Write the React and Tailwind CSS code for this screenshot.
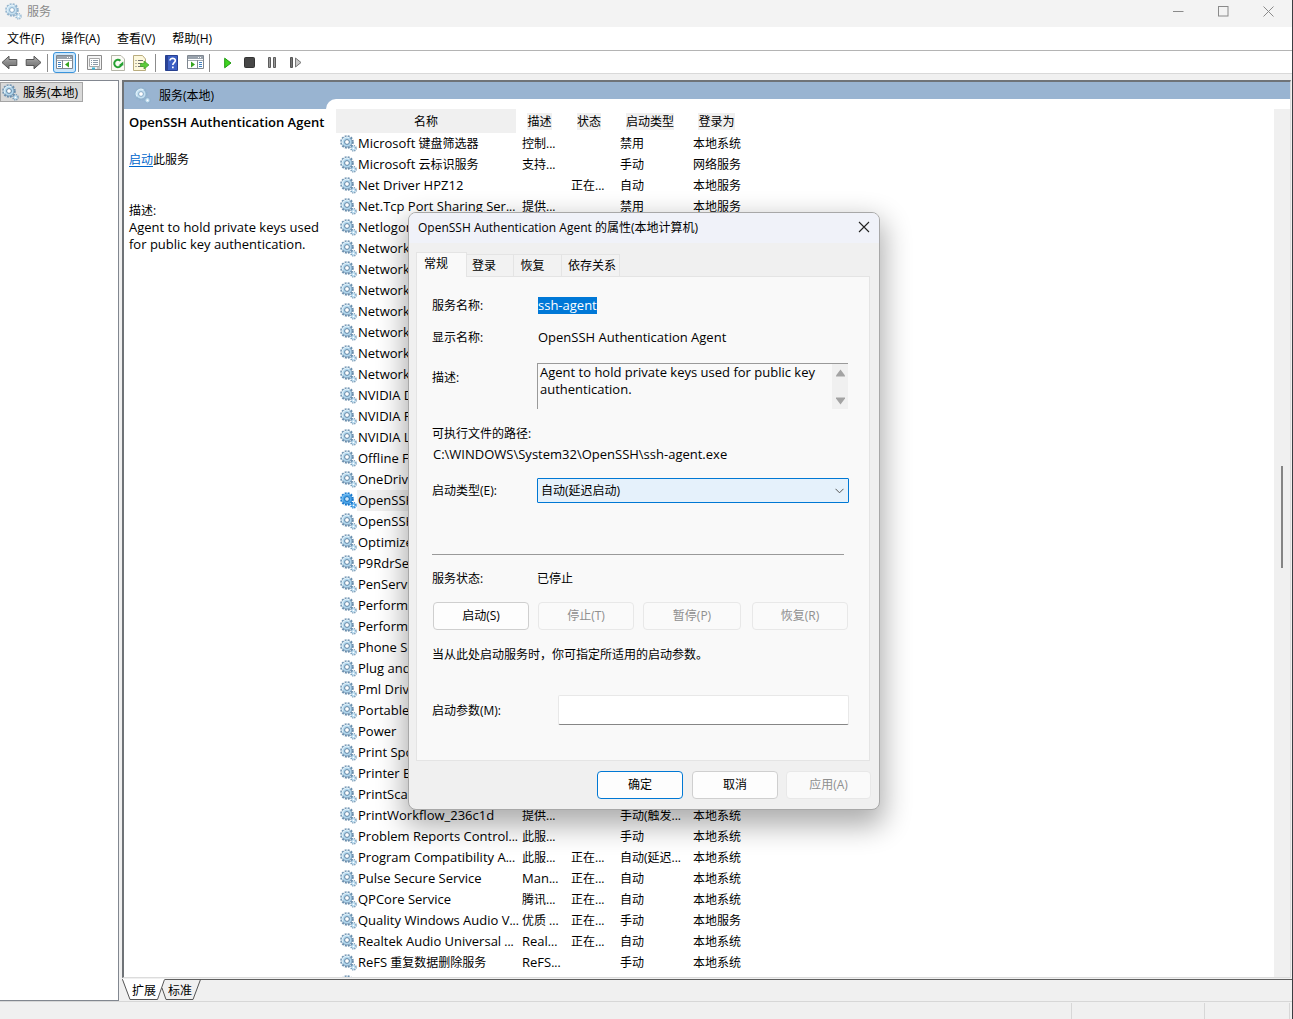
import React from "react";

function Gears({ active = false, faded = false }) {
  const teeth = active ? "#1478cf" : faded ? "#8fb2cd" : "#6a8fae";
  const ring = active ? "#4ba6ea" : faded ? "#c4e0f1" : "#b3d8ee";
  const edge = active ? "#0f6cbd" : faded ? "#86a9c6" : "#5f83a3";
  return (
    <svg width="17" height="17" viewBox="0 0 17 17" className="shrink-0" aria-hidden="true">
      <circle cx="7" cy="7" r="5.800" fill="none" stroke={teeth} strokeWidth="2" strokeDasharray="1.900 1.137" />
      <circle cx="7" cy="7" r="5" fill={ring} stroke={edge} strokeWidth="0.700" />
      <path d="M3 9.500A4.700 4.700 0 0 1 9.500 3" fill="none" stroke={active ? "#7cc1f3" : "#e2f3fc"} strokeWidth="1.200" />
      <circle cx="7" cy="7" r="2.400" fill={active ? "#cfe7f9" : "#fff"} stroke={edge} strokeWidth="1" />
      <circle cx="13.500" cy="13.300" r="2.500" fill="none" stroke={teeth} strokeWidth="1.600" strokeDasharray="1.100 0.860" />
      <circle cx="13.500" cy="13.300" r="1.500" fill="#fff" stroke={ring} strokeWidth="1.200" />
    </svg>
  );
}

function ToolButton({ label, children, className = "" }) {
  return (
    <button type="button" aria-label={label} className={`flex h-[21px] shrink-0 items-center justify-center ${className}`}>
      {children}
    </button>
  );
}

const Sep = ({ className = "" }) => <span className={`mb-px h-[18px] w-px shrink-0 bg-[#8c8c8c] ${className}`} />;

function Arrow({ flip }) {
  return (
    <svg width="17" height="15" viewBox="0 0 17 15" className={flip ? "-scale-x-100" : ""}>
      <defs>
        <linearGradient id="arrow" x1="0" y1="0" x2="0" y2="1">
          <stop offset="0" stopColor="#b5b5b5" />
          <stop offset="0.5" stopColor="#8a8a8a" />
          <stop offset="1" stopColor="#6f6f6f" />
        </linearGradient>
      </defs>
      <path d="M1 7.500 8 1.200v3.300h7.800v6H8v3.300z" fill="url(#arrow)" stroke="#555" strokeLinejoin="round" />
    </svg>
  );
}

function PanelIcon({ right }) {
  return (
    <svg width="17" height="15" viewBox="0 0 17 15">
      <path d="M.5.5h16v13H.5z" fill="#fff" stroke="#7f8790" />
      <path d="M1 1h15v3H1z" fill="#9aa3ad" />
      <path d="M11 2h1v1h-1zM13 2h1v1h-1z" fill="#fff" />
      <path d="M1 5.500h15" stroke="#a4abb3" />
      {right ? (
        <>
          <path d="M10.500 5v9" stroke="#7f8790" />
          <path d="M12 7.500h3M12 9.500h3M12 11.500h3" stroke="#3d7fc0" />
          <path d="M4 6.500v6l4-3z" fill="#36a51e" />
        </>
      ) : (
        <>
          <path d="M6.500 5v9" stroke="#7f8790" />
          <path d="M2 7.500h3M2 9.500h3M2 11.500h3" stroke="#3d7fc0" />
          <path d="M13 6.500v6l-4-3z" fill="#36a51e" />
        </>
      )}
    </svg>
  );
}

function Toolbar() {
  return (
    <div className="flex h-[23px] shrink-0 items-end border-b border-[#d9d9d9] bg-white">
      <ToolButton label="后退" className="ml-[1px]"><Arrow /></ToolButton>
      <ToolButton label="前进" className="ml-[7px]"><Arrow flip /></ToolButton>
      <Sep className="ml-[5px]" />
      <ToolButton label="控制台树" className="ml-[5px] w-[23px] rounded-[3px] border border-[#3a94dc] bg-[#cce6fa]">
        <PanelIcon />
      </ToolButton>
      <Sep className="ml-[2px]" />
      <ToolButton label="属性" className="ml-[8px]">
        <svg width="15" height="16" viewBox="0 0 15 16">
          <path d="M.5.5h14v14H.5z" fill="#f4f4f4" stroke="#8b8b8b" />
          <path d="M2.500 3.500h10v8h-10z" fill="#fff" stroke="#a8a8a8" />
          <path d="M4 5.500h1M6 5.500h5M4 7.500h1M6 7.500h5M4 9.500h1M6 9.500h5" stroke="#8d9aa8" />
          <path d="M10 13h3" stroke="#999" />
          <path d="M5 12.500h3v2H5z" fill="#35b4d8" />
        </svg>
      </ToolButton>
      <ToolButton label="刷新" className="ml-[9px]">
        <svg width="14" height="16" viewBox="0 0 14 16">
          <path d="M.5.5h9.500l3.500 3.500v11.500H.5z" fill="#fbfbf5" stroke="#b5b5a8" />
          <path d="M10.500 9.500A3.700 3.700 0 1 1 9.400 5.700" fill="none" stroke="#25a032" strokeWidth="2" />
          <path d="M7.400 10.500h4.900v-4z" fill="#25a032" />
        </svg>
      </ToolButton>
      <ToolButton label="导出列表" className="ml-[8px]">
        <svg width="17" height="16" viewBox="0 0 17 16">
          <path d="M.5.5h9L12.500 4v11.500H.5z" fill="#fdf8dc" stroke="#b9ac7e" />
          <path d="M2.500 5.500h1M5 5.500h5M2.500 8.500h1M5 8.500h4M2.500 11.500h1M5 11.500h5" stroke="#6e6e6e" />
          <path d="M7.500 8.500H11V6l5 4-5 4v-2.500H7.500z" fill="#5ccb3a" stroke="#3f9f2a" strokeWidth="0.700" />
        </svg>
      </ToolButton>
      <Sep className="ml-[5px]" />
      <ToolButton label="帮助" className="ml-[9px]">
        <svg width="13" height="16" viewBox="0 0 13 16">
          <path d="M.5.5h12v15H.5z" fill="#3c5fc4" stroke="#27408f" />
          <path d="M1 1h2v14H1z" fill="#2a4396" />
          <path d="M5 5.500C5 2.600 10.500 2.700 10.300 5.700 10.200 7.500 7.800 7.700 7.800 10" fill="none" stroke="#fff" strokeWidth="1.600" />
          <path d="M7 11.500h1.700v1.700H7z" fill="#fff" />
        </svg>
      </ToolButton>
      <ToolButton label="操作窗格" className="ml-[9px]"><PanelIcon right /></ToolButton>
      <Sep className="ml-[5px]" />
      <ToolButton label="启动服务" className="ml-[14px]">
        <svg width="8" height="12" viewBox="0 0 8 12"><path d="M.7 1.200 7 6 .7 10.800z" fill="#3fd321" stroke="#1f9a10" /></svg>
      </ToolButton>
      <ToolButton label="停止服务" className="ml-[12px]">
        <svg width="11" height="11" viewBox="0 0 11 11"><rect x=".5" y=".5" width="10" height="10" rx="1" fill="#474747" stroke="#333" /></svg>
      </ToolButton>
      <ToolButton label="暂停服务" className="ml-[13px]">
        <svg width="8" height="11" viewBox="0 0 8 11"><path d="M.5.5h2v10h-2zM5.500.5h2v10h-2z" fill="#999" stroke="#5c5c5c" /></svg>
      </ToolButton>
      <ToolButton label="重新启动服务" className="ml-[14px]">
        <svg width="12" height="11" viewBox="0 0 12 11"><path d="M.5.500h2v10h-2z" fill="#777" stroke="#555" /><path d="M5.500 1v9l5.500-4.500z" fill="#c8c8c8" stroke="#777" /></svg>
      </ToolButton>
    </div>
  );
}

const SYS = "本地系统";
const SRV = "本地服务";
const services = [
  ["Microsoft 键盘筛选器", "控制...", "", "禁用", SYS],
  ["Microsoft 云标识服务", "支持...", "", "手动", "网络服务"],
  ["Net Driver HPZ12", "", "正在...", "自动", SRV],
  ["Net.Tcp Port Sharing Ser...", "提供...", "", "禁用", SRV],
  ["Netlogon"],
  ["Network"],
  ["Network"],
  ["Network"],
  ["Network"],
  ["Network"],
  ["Network"],
  ["Network"],
  ["NVIDIA D"],
  ["NVIDIA F"],
  ["NVIDIA L"],
  ["Offline Fi"],
  ["OneDrive"],
  ["OpenSSH"],
  ["OpenSSH"],
  ["Optimize"],
  ["P9RdrSer"],
  ["PenServic"],
  ["Performa"],
  ["Performa"],
  ["Phone Se"],
  ["Plug and"],
  ["Pml Drive"],
  ["Portable"],
  ["Power"],
  ["Print Spo"],
  ["Printer Ex"],
  ["PrintScan"],
  ["PrintWorkflow_236c1d", "提供...", "", "手动(触发...", SYS],
  ["Problem Reports Control...", "此服...", "", "手动", SYS],
  ["Program Compatibility A...", "此服...", "正在...", "自动(延迟...", SYS],
  ["Pulse Secure Service", "Man...", "正在...", "自动", SYS],
  ["QPCore Service", "腾讯...", "正在...", "自动", SYS],
  ["Quality Windows Audio V...", "优质 ...", "正在...", "手动", SRV],
  ["Realtek Audio Universal ...", "Real...", "正在...", "自动", SYS],
  ["ReFS 重复数据删除服务", "ReFS...", "", "手动", SYS],
  [""],
];
const SELECTED = 17;

/* Latin runs are set one step larger than the Chinese characters beside them. */
function Mixed({ text }) {
  return text.split(/([A-Za-z][A-Za-z0-9_. ]*[A-Za-z0-9])/).map((part, i) =>
    /^[A-Za-z]/.test(part) ? <span key={i} className="text-[13px]">{part}</span> : part
  );
}

function ServiceTable() {
  const headings = ["名称", "描述", "状态", "启动类型", "登录为"];
  return (
    <table className="w-[412px] table-fixed border-collapse">
      <colgroup>
        <col className="w-[180px]" />
        <col className="w-[50px]" />
        <col className="w-[49px]" />
        <col className="w-[73px]" />
        <col className="w-[60px]" />
      </colgroup>
      <thead>
        <tr className="h-[24px]">
          {headings.map((h, i) => (
            <th key={h} scope="col" className={`p-0 text-center font-normal ${i === 0 ? "bg-[#f0f0f0]" : "pr-[3px]"}`}>
              <span className="bg-[#f0f0f0]">{h}</span>
            </th>
          ))}
        </tr>
      </thead>
      <tbody>
        {services.map(([name, ...rest], i) => (
          <tr key={i} className="h-[21px]">
            <td className="p-0 pl-[4px]">
              <div className="flex h-[21px] items-center">
                <Gears active={i === SELECTED} />
                <span className={`min-w-0 flex-1 pl-px leading-[21px] whitespace-pre ${i === SELECTED ? "bg-[#f0f0f0]" : ""}`}>
                  <Mixed text={name} />
                </span>
              </div>
            </td>
            {rest.map((v, c) => (
              <td key={c} className={`p-0 whitespace-nowrap ${c === 0 ? "pl-[6px]" : "pl-[5px]"}`}><Mixed text={v} /></td>
            ))}
          </tr>
        ))}
      </tbody>
    </table>
  );
}

function PushButton({ children, disabled, primary, className = "" }) {
  const look = disabled
    ? "border-[#e8e8e8] bg-[#fafafa] text-[#8f8f8f]"
    : primary
      ? "border-[#0078d4] bg-[#fdfdfd]"
      : "border-[#cfcfcf] bg-[#fdfdfd]";
  return (
    <button type="button" disabled={disabled} className={`h-[28px] rounded-[4px] border leading-[20px] ${look} ${className}`}>
      {children}
    </button>
  );
}

function PropertiesDialog() {
  return (
    <section
      role="dialog"
      aria-labelledby="dialog-title"
      className="absolute top-[212px] left-[408px] w-[472px] overflow-hidden rounded-[8px] border border-[#a8a8a8] bg-[#f0f0f0] shadow-[0_12px_28px_4px_rgba(0,0,0,0.32)]"
    >
      <header className="flex h-[30px] items-center justify-between bg-[#f0f2f9] px-[9px] pb-[2px]">
        <h2 id="dialog-title">OpenSSH Authentication Agent 的属性(本地计算机)</h2>
        <button type="button" aria-label="关闭">
          <svg width="12" height="12" viewBox="0 0 12 12"><path d="m1 1 10 10M11 1 1 11" stroke="#222" strokeWidth="1.100" /></svg>
        </button>
      </header>
      <div className="px-[7px] pt-[9px]">
        <div role="tablist" className="flex h-[24px] items-end">
          <button role="tab" aria-selected="true" type="button" className="z-10 -mb-px h-[25px] w-[51px] border border-b-0 border-[#e4e4e4] bg-[#f9f9f9] pr-[11px] pb-[3px]">常规</button>
          <button role="tab" aria-selected="false" type="button" className="h-[22px] w-[47px] border-t border-r border-[#e4e4e4] bg-[#f2f2f2] pr-[12px]">登录</button>
          <button role="tab" aria-selected="false" type="button" className="h-[22px] w-[48px] border-t border-r border-[#e4e4e4] bg-[#f2f2f2] pr-[10px]">恢复</button>
          <button role="tab" aria-selected="false" type="button" className="h-[22px] w-[58px] border-t border-r border-[#e4e4e4] bg-[#f2f2f2] pl-[3px]">依存关系</button>
        </div>
        <form className="mr-[2px] h-[485px] border border-[#e4e4e4] bg-[#f9f9f9] pt-[17px] pr-[20px] pl-[15px]" onSubmit={(e) => e.preventDefault()}>
          <div className="flex h-[22px] items-center">
            <label htmlFor="service-name" className="w-[106px]">服务名称:</label>
            <input id="service-name" readOnly value="ssh-agent" className="field-sizing-content h-[17px] bg-[#0078d7] text-[13px] text-white outline-none" />
          </div>
          <div className="mt-[10px] flex h-[22px] items-center">
            <span className="w-[106px]">显示名称:</span>
            <span className="text-[13px]">OpenSSH Authentication Agent</span>
          </div>
          <div className="mt-[15px] flex">
            <label htmlFor="description" className="w-[105px] pt-[6px]">描述:</label>
            <div className="mr-px flex h-[46px] flex-1 border-t border-l border-[#9a9a9a]">
              <textarea
                id="description"
                readOnly
                value="Agent to hold private keys used for public key authentication."
                className="h-full flex-1 resize-none overflow-hidden bg-transparent pl-[2px] text-[13px] leading-[17px] outline-none"
              />
              <div className="flex w-[16px] flex-col items-center justify-between bg-[#f0f0f0] pt-[5px] pb-[4px]">
                <svg width="9" height="8" viewBox="0 0 9 8"><path d="M4.500.5 9 6.500v1H0v-1z" fill="#a3a3a3" /></svg>
                <svg width="9" height="8" viewBox="0 0 9 8"><path d="M4.500 7.500 9 1.500v-1H0v1z" fill="#a3a3a3" /></svg>
              </div>
            </div>
          </div>
          <div className="mt-[14px] leading-[21px]">
            <p>可执行文件的路径:</p>
            <p className="pl-px text-[13px]">C:\WINDOWS\System32\OpenSSH\ssh-agent.exe</p>
          </div>
          <div className="mt-[13px] flex items-center">
            <label htmlFor="startup-type" className="w-[105px]">启动类型(E):</label>
            <div className="relative flex-1">
              <select id="startup-type" className="h-[25px] w-full appearance-none rounded-[1px] border border-[#0078d4] bg-[#e5f1fb] pl-[3px]">
                <option>自动(延迟启动)</option>
              </select>
              <svg width="9" height="6" viewBox="0 0 9 6" className="pointer-events-none absolute top-[10px] right-[5px]"><path d="m.5.8 4 4 4-4" fill="none" stroke="#555" /></svg>
            </div>
          </div>
          <hr className="mt-[51px] mr-[5px] border-[#9a9a9a]" />
          <div className="mt-[12px] flex h-[22px] items-center">
            <span className="w-[105px]">服务状态:</span>
            <span>已停止</span>
          </div>
          <div className="mt-[13px] ml-px flex">
            <PushButton className="w-[96px]">启动(S)</PushButton>
            <PushButton disabled className="ml-[9px] w-[96px]">停止(T)</PushButton>
            <PushButton disabled className="ml-[9px] w-[98px]">暂停(P)</PushButton>
            <PushButton disabled className="ml-[11px] w-[96px]">恢复(R)</PushButton>
          </div>
          <p className="mt-[14px] leading-[22px]">当从此处启动服务时，你可指定所适用的启动参数。</p>
          <div className="mt-[29px] flex items-center">
            <label htmlFor="params" className="w-[126px]">启动参数(M):</label>
            <input id="params" className="h-[30px] min-w-0 flex-1 rounded-[2px] border border-[#e8e8e8] border-b-[#868686] bg-white px-2 outline-none" />
          </div>
        </form>
      </div>
      <footer className="flex justify-end pt-[10px] pr-[8px] pb-[10px]">
        <PushButton primary className="w-[86px]">确定</PushButton>
        <PushButton className="ml-[9px] w-[86px]">取消</PushButton>
        <PushButton disabled className="ml-[8px] w-[85px]">应用(A)</PushButton>
      </footer>
    </section>
  );
}

export default function App() {
  return (
    <div className="relative flex h-screen flex-col overflow-hidden border-r border-[#3c3d42] bg-[#f0f0f0] font-['Open_Sans','Noto_Sans_CJK_SC',sans-serif] text-[12px] leading-[17px] text-black">
      <header className="flex h-[27px] shrink-0 items-center bg-[#f3f3f3] pb-[5px] pl-[5px] text-[#8a8a8a]">
        <Gears faded />
        <h1 className="ml-[5px] flex-1">服务</h1>
        <div className="flex items-center gap-[34px] pr-[18px]">
          <button type="button" aria-label="最小化"><svg width="11" height="11" viewBox="0 0 11 11"><path d="M0 5.500h10.500" stroke="#8a8a8a" /></svg></button>
          <button type="button" aria-label="最大化"><svg width="11" height="11" viewBox="0 0 11 11"><rect x=".5" y=".5" width="9.500" height="9.500" fill="none" stroke="#8a8a8a" /></svg></button>
          <button type="button" aria-label="关闭窗口"><svg width="11" height="11" viewBox="0 0 11 11"><path d="m.5.5 10 10M10.500.5l-10 10" stroke="#8a8a8a" /></svg></button>
        </div>
      </header>
      <nav className="flex h-[24px] shrink-0 items-center gap-[17px] border-b border-[#b4b4b4] bg-white pl-[7px]">
        {["文件(F)", "操作(A)", "查看(V)", "帮助(H)"].map((m) => (
          <button key={m} type="button">{m}</button>
        ))}
      </nav>
      <Toolbar />

      <main className="mt-[6px] flex min-h-0 flex-1 gap-[3px]">
        <aside className="w-[119px] shrink-0 border-t border-r border-b border-[#828790] bg-white pt-px">
          <button type="button" className="flex h-[20px] w-[83px] items-center gap-[4px] border border-[#a5a5a5] bg-[#d9d9d9] pl-px whitespace-nowrap">
            <Gears />
            服务(本地)
          </button>
        </aside>

        <div className="flex min-w-0 flex-1 flex-col">
          <section className="mr-px flex min-h-0 flex-1 flex-col border-t-2 border-r border-b border-l-2 border-[#dcdcdc] border-t-[#6f7377] border-l-[#6f7377] bg-white">
            <div className="flex h-[27px] shrink-0 bg-[#99b4d1]">
              <div className="flex w-[202px] shrink-0 items-center gap-[8px] pl-[10px]">
                <Gears faded />
                服务(本地)
              </div>
              <div className="h-[10px] flex-1 self-end rounded-tl-[10px] bg-white" />
            </div>
            <div className="flex min-h-0 flex-1 overflow-hidden">
              <div className="w-[212px] shrink-0 pt-[5px] pl-[5px]">
                <h2 className="text-[13px] font-semibold whitespace-nowrap">OpenSSH Authentication Agent</h2>
                <p className="mt-[20px]"><a href="#start" className="text-[#0066cc] underline underline-offset-2">启动</a>此服务</p>
                <p className="mt-[34px]">描述:</p>
                <p className="w-[196px] text-[13px]">Agent to hold private keys used for public key authentication.</p>
              </div>
              <div className="min-w-0 flex-1 overflow-hidden"><ServiceTable /></div>
              <div className="flex w-[16px] shrink-0 justify-center bg-[#f0f0f0] pt-[357px]">
                <div className="h-[102px] w-[2px] bg-[#858585]" />
              </div>
            </div>
          </section>
          <div role="tablist" className="relative mt-px flex h-[22px] shrink-0 border-t border-[#5f5f5f]">
            <svg width="80" height="22" viewBox="0 0 80 22" className="absolute -top-px left-0" aria-hidden="true">
              <path d="M.5 0 8 20.500h27.500L43 0z" fill="#fff" />
              <path d="M.5.5 8 20.500h27.500L42.500.5" fill="none" stroke="#555" />
              <path d="m40 9 4 11.500h27L78.500.5" fill="none" stroke="#555" />
            </svg>
            <button role="tab" aria-selected="true" type="button" className="relative ml-[10px]">扩展</button>
            <button role="tab" aria-selected="false" type="button" className="relative ml-[12px]">标准</button>
          </div>
        </div>
      </main>

      <footer className="flex h-[18px] shrink-0 justify-end border-t border-[#d7d7d7] pt-px">
        <div className="w-[133px] border-l border-[#d7d7d7]" />
        <div className="w-[86px] border-r border-l border-[#d7d7d7]" />
        <div className="w-[2px]" />
      </footer>
      <PropertiesDialog />
    </div>
  );
}
